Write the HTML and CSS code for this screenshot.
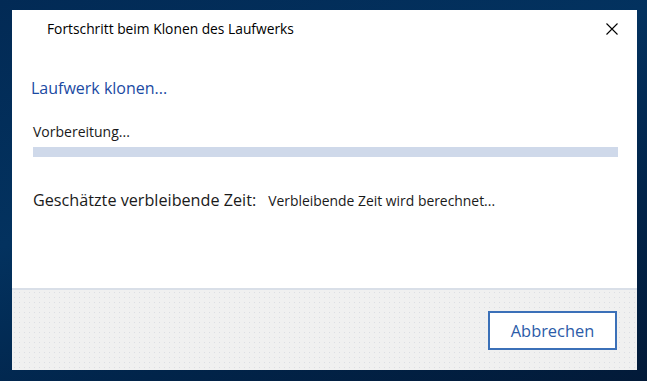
FILE: index.html
```html
<!DOCTYPE html>
<html lang="de">
<head>
<meta charset="UTF-8">
<title>Fortschritt beim Klonen des Laufwerks</title>
<link rel="stylesheet" href="styles.css">
</head>
<body>

<div class="dialog">
    <div class="titlebar">
        <span class="title">Fortschritt beim Klonen des Laufwerks</span>
        <button class="close" aria-label="Schließen">
            <svg width="12" height="12" viewBox="0 0 12 12">
                <path d="M0.5 0.5 L11.5 11.5 M11.5 0.5 L0.5 11.5" stroke="#000" stroke-width="1.1" fill="none"/>
            </svg>
        </button>
    </div>

    <div class="content">
        <h1 class="heading">Laufwerk klonen...</h1>
        <div class="status">Vorbereitung...</div>
        <div class="progress"><div class="bar"></div></div>
        <div class="remaining">
            <span class="label">Geschätzte verbleibende Zeit:</span>
            <span class="value">Verbleibende Zeit wird berechnet...</span>
        </div>
    </div>

    <div class="footer">
        <button class="cancel">Abbrechen</button>
    </div>
</div>

</body>
</html>
```

FILE: styles.css
```css
html, body {
    margin: 0;
    height: 100%;
}

body {
    font-family: "Open Sans", "Noto Sans", sans-serif;
    background: linear-gradient(160deg, #022a55 0%, #03325f 40%, #01244a 70%, #021a38 100%);
    padding: 10px 10px 11px 12px;
    box-sizing: border-box;
    overflow: hidden;
}

.dialog {
    width: 625px;
    height: 360px;
    background: #fff;
    display: flex;
    flex-direction: column;
}

.titlebar {
    height: 38px;
    display: flex;
    align-items: center;
    justify-content: space-between;
    padding: 0 0 0 35px;
    flex-shrink: 0;
}

.title {
    font-size: 13.8px;
    color: #000;
    margin-top: -1px;
}

.close {
    width: 46px;
    height: 38px;
    border: 0;
    background: none;
    padding: 0;
    display: flex;
    align-items: center;
    justify-content: center;
    margin-right: 2px;
}

.content {
    flex: 1;
    padding: 0 19px 0 21px;
}

.heading {
    font-size: 16px;
    font-weight: normal;
    color: #1b4aa3;
    margin: 29px 0 0 -2px;
    line-height: 22px;
}

.status {
    font-size: 14px;
    color: #1a1a1a;
    margin-top: 24px;
    line-height: 18px;
}

.progress {
    height: 10px;
    background: #cfd9ea;
    margin-top: 6px;
}

.bar {
    width: 0;
    height: 100%;
    background: #06b025;
}

.remaining {
    margin-top: 32px;
    display: flex;
    align-items: baseline;
    gap: 12px;
    color: #1a1a1a;
}

.label {
    font-size: 16.2px;
}

.value {
    font-size: 13.9px;
}

.footer {
    height: 80px;
    flex-shrink: 0;
    border-top: 2px solid #d9dfe8;
    background-color: #f0f0f0;
    background-image: radial-gradient(#dcdee4 0.6px, transparent 0.8px);
    background-size: 5px 5px;
    display: flex;
    justify-content: flex-end;
    align-items: center;
    padding-right: 20px;
}

.cancel {
    width: 129px;
    height: 39px;
    border: 2px solid #3b70b8;
    background: #fff;
    color: #2c5ba8;
    font-family: inherit;
    font-size: 16.4px;
}
```
